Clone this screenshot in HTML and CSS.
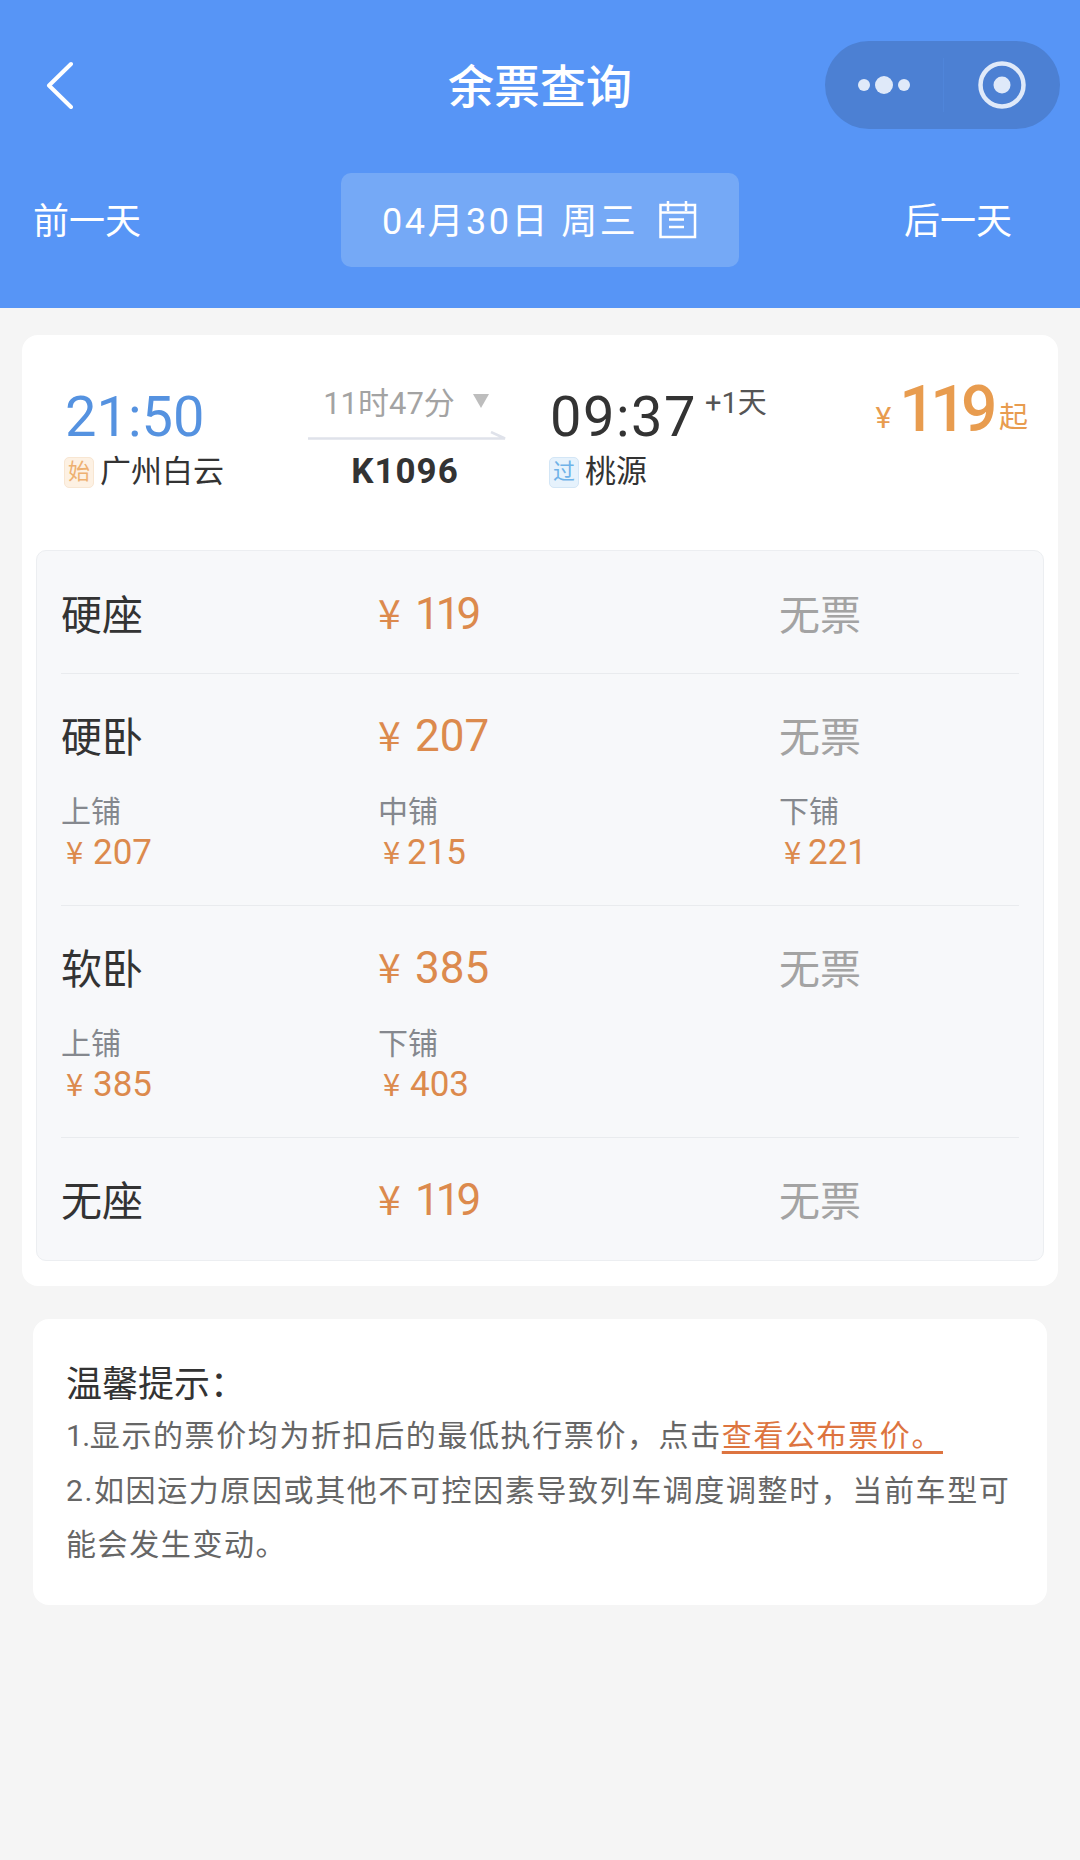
FILE: index.html
```html
<!DOCTYPE html>
<html>
<head>
  <title>余票查询</title>
  <link rel="stylesheet" href="styles.css">
</head>
<body>
  <header class="header">
    <div class="nav">
      <svg class="back" width="27" height="48" viewBox="0 0 27 48"><path d="M25 3 L3 24.500 L25 46" fill="none" stroke="#fff" stroke-width="4" stroke-linecap="round" stroke-linejoin="round"/></svg>
      <h1 class="nav-title">余票查询</h1>
      <div class="capsule">
        <div class="capsule-part">
          <svg width="52" height="20" viewBox="0 0 52 20"><circle cx="6" cy="10" r="6" fill="#dfe9f9"/><circle cx="26" cy="10" r="9" fill="#dfe9f9"/><circle cx="46" cy="10" r="6" fill="#dfe9f9"/></svg>
        </div>
        <div class="capsule-line"></div>
        <div class="capsule-part capsule-part-right">
          <svg width="48" height="48" viewBox="0 0 48 48"><circle cx="24" cy="24" r="21.500" fill="none" stroke="#dfe9f9" stroke-width="4.500"/><circle cx="24" cy="24" r="8.500" fill="#dfe9f9"/></svg>
        </div>
      </div>
    </div>
    <div class="date-row">
      <span class="day-link">前一天</span>
      <div class="date-box">
        <span class="date-text">04月30日 周三</span>
        <svg class="calendar" width="38" height="38" viewBox="0 0 38 38" fill="none" stroke="#fff" stroke-width="2.500"><path d="M1.500 4 H36 V36 H1.500 Z"/><path d="M1.500 11.500 H36"/><path d="M9 0 V10 M27 0 V10"/><path d="M10 18.500 H25 M10 26 H25"/></svg>
      </div>
      <span class="day-link day-link-right">后一天</span>
    </div>
  </header>

  <section class="card">
    <div class="train">
      <div class="depart">
        <div class="time time-blue">21:50</div>
        <div class="station"><span class="tag tag-orange">始</span>广州白云</div>
      </div>
      <div class="middle">
        <div class="duration">11时47分<span class="triangle"></span></div>
        <svg class="arrow" width="198" height="9" viewBox="0 0 198 9"><path d="M0 7.500 H197 L183 1" fill="none" stroke="#dfe2ea" stroke-width="2.500"/></svg>
        <div class="train-no">K1096</div>
      </div>
      <div class="arrive">
        <div class="time time-arrive">09:37<span class="next-day">+1天</span></div>
        <div class="station"><span class="tag tag-blue">过</span>桃源</div>
      </div>
      <div class="from-price"><span class="from-yen">¥</span><span class="from-num">119</span><span class="from-unit">起</span></div>
    </div>

    <div class="seats">
      <div class="seat">
        <div class="seat-main">
          <span class="seat-name">硬座</span>
          <span class="seat-price"><span class="yen">¥</span><span class="ones">119</span></span>
          <span class="seat-left">无票</span>
        </div>
      </div>
      <div class="seat">
        <div class="seat-main">
          <span class="seat-name">硬卧</span>
          <span class="seat-price"><span class="yen">¥</span>207</span>
          <span class="seat-left">无票</span>
        </div>
        <div class="berths">
          <div class="berth">上铺<div class="berth-price"><span class="berth-yen">¥</span>207</div></div>
          <div class="berth">中铺<div class="berth-price"><span class="berth-yen berth-yen-tight">¥</span>215</div></div>
          <div class="berth">下铺<div class="berth-price"><span class="berth-yen berth-yen-tight">¥</span>221</div></div>
        </div>
      </div>
      <div class="seat">
        <div class="seat-main">
          <span class="seat-name">软卧</span>
          <span class="seat-price"><span class="yen">¥</span>385</span>
          <span class="seat-left">无票</span>
        </div>
        <div class="berths">
          <div class="berth">上铺<div class="berth-price"><span class="berth-yen">¥</span>385</div></div>
          <div class="berth">下铺<div class="berth-price"><span class="berth-yen">¥</span>403</div></div>
        </div>
      </div>
      <div class="seat">
        <div class="seat-main">
          <span class="seat-name">无座</span>
          <span class="seat-price"><span class="yen">¥</span><span class="ones">119</span></span>
          <span class="seat-left">无票</span>
        </div>
      </div>
    </div>
  </section>

  <section class="notice">
    <div class="notice-title">温馨提示：</div>
    <p class="notice-line"><span class="notice-num">1.</span>显示的票价均为折扣后的最低执行票价，点击<span class="notice-link">查看公布票价。</span></p>
    <p class="notice-line">2.如因运力原因或其他不可控因素导致列车调度调整时，当前车型可能会发生变动。</p>
  </section>
</body>
</html>
```

FILE: styles.css
```css
* {
  box-sizing: border-box;
}

body {
  font-family: Roboto, "Noto Sans CJK SC", sans-serif;
  background-color: #f5f5f5;
  margin: 0;
  height: 1860px;
  overflow: hidden;
  color: #333;
}

/* header */
.header {
  background-color: #5795f6;
  height: 308px;
  padding-top: 41px;
  color: #fff;
}

.nav {
  display: grid;
  grid-template-columns: 1fr auto 1fr;
  align-items: center;
  height: 88px;
  padding: 0 20px;
}

.back {
  margin-left: 26px;
}

.nav-title {
  margin: 4px 0 0;
  font-size: 46px;
  line-height: 60px;
  font-weight: 500;
}

.capsule {
  justify-self: end;
  display: flex;
  align-items: center;
  width: 235px;
  height: 88px;
  border-radius: 44px;
  background-color: #4c80d3;
}

.capsule-part {
  display: flex;
  align-items: center;
  width: 118px;
  padding-left: 33px;
}

.capsule-line {
  width: 1px;
  height: 54px;
  background-color: #4f85da;
}

.capsule-part-right {
  width: 116px;
  padding-left: 34px;
}

.date-row {
  display: grid;
  grid-template-columns: 1fr 398px 1fr;
  align-items: center;
  margin-top: 44px;
  height: 94px;
}

.day-link {
  padding: 3px 0 0 33px;
  font-size: 36px;
  line-height: 50px;
}

.day-link-right {
  padding: 3px 68px 0 0;
  text-align: right;
}

.date-box {
  display: flex;
  align-items: center;
  height: 94px;
  padding-left: 41px;
  border-radius: 10px;
  background-color: #75a9f6;
}

.date-text {
  padding-top: 3px;
  font-size: 36px;
  line-height: 50px;
  letter-spacing: 2.500px;
  white-space: pre;
}

.calendar {
  margin-left: 21px;
}

/* train card */
.card {
  margin: 27px 22px 0;
  height: 951px;
  padding: 0 14px;
  border-radius: 16px;
  background-color: #fff;
}

.train {
  position: relative;
  display: flex;
  height: 215px;
  padding-top: 47px;
}

.depart {
  width: 272px;
  padding-left: 29px;
}

.time {
  font-size: 56px;
  line-height: 70px;
  color: #333;
  white-space: nowrap;
}

.time-blue {
  color: #5592e0;
}

.time-arrive {
  letter-spacing: 1.500px;
}

.station {
  display: flex;
  align-items: center;
  margin-top: -2px;
  font-size: 31px;
  line-height: 44px;
  color: #333;
  white-space: nowrap;
}

.tag {
  display: flex;
  align-items: center;
  justify-content: center;
  width: 30px;
  height: 31px;
  margin: 0 6px 0 -1px;
  border-radius: 5px;
  font-size: 22px;
}

.tag-orange {
  color: #eeb070;
  background-color: #fdf1e3;
  border: 1px solid #f8e6d2;
}

.tag-blue {
  color: #6fb2e8;
  background-color: #e6f2fc;
  border: 1px solid #d3e6f6;
}

.middle {
  width: 198px;
  margin-right: 44px;
  text-align: center;
}

.duration {
  padding: 4px 2px 0 0;
  font-size: 31px;
  line-height: 36px;
  color: #a3a3a3;
  white-space: nowrap;
}

.triangle {
  display: inline-block;
  margin-left: 18px;
  vertical-align: 6px;
  border-left: 8px solid transparent;
  border-right: 8px solid transparent;
  border-top: 14px solid #bdbdbd;
}

.arrow {
  display: block;
  margin-top: 9px;
}

.train-no {
  margin-top: 10px;
  padding-right: 4px;
  font-size: 35px;
  line-height: 44px;
  font-weight: 700;
  letter-spacing: 1px;
}

.arrive {
  width: 300px;
}

.next-day {
  margin-left: 8px;
  font-size: 29px;
  line-height: 30px;
  letter-spacing: 0;
  vertical-align: 23px;
  color: #555;
}

.from-price {
  position: absolute;
  top: 37px;
  right: 16px;
  color: #e89c4f;
  white-space: nowrap;
}

.from-yen {
  margin-right: 8px;
  font-size: 30px;
  vertical-align: 3px;
}

.from-num {
  font-size: 64px;
  line-height: 76px;
  font-weight: 500;
  letter-spacing: -5.500px;
}

.from-unit {
  margin-left: 7px;
  font-size: 29px;
  vertical-align: 3px;
}

/* seat table */
.seats {
  height: 711px;
  padding: 0 24px;
  border: 1px solid #eceef1;
  border-radius: 10px;
  background-color: #f7f8fa;
}

.seat {
  border-bottom: 1px solid #e9ebee;
  padding-top: 28px;
  height: 232px;
}

.seat:first-child {
  height: 123px;
  padding-top: 29px;
}

.seat:last-child {
  height: 123px;
  border-bottom: none;
}

.seat-main,
.berths {
  display: grid;
  grid-template-columns: 317px 401px 1fr;
}

.seat-main {
  align-items: center;
  height: 64px;
}

.seat-name {
  font-size: 41px;
  color: #333;
}

.seat-price {
  padding-top: 3px;
  font-size: 44px;
  color: #dc8a4d;
}

.yen {
  display: inline-block;
  width: 37px;
  font-size: 41px;
  font-family: "Noto Sans CJK SC", sans-serif;
  line-height: 44px;
}

.ones {
  letter-spacing: -4px;
}

.seat-left {
  font-size: 41px;
  color: #a3a3a3;
}

.berths {
  margin-top: 26px;
  font-size: 30px;
  line-height: 40px;
  color: #85888e;
}

.berth-price {
  padding-left: 5px;
  font-size: 35px;
  line-height: 42px;
  color: #dc8a4d;
}

.berth-yen {
  display: inline-block;
  width: 27px;
  font-size: 31px;
  font-family: "Noto Sans CJK SC", sans-serif;
  line-height: 36px;
}

.berth-yen-tight {
  width: 24px;
}

/* notice */
.notice {
  margin: 33px 33px 0;
  height: 286px;
  padding: 39px 34px 0 33px;
  border-radius: 16px;
  background-color: #fff;
}

.notice-title {
  font-size: 36px;
  line-height: 54px;
  margin-bottom: -3px;
  color: #333;
}

.notice-line {
  margin: 0;
  font-size: 30px;
  line-height: 54.500px;
  letter-spacing: 1.600px;
  color: #666;
}

.notice-num {
  letter-spacing: -0.500px;
}

.notice-link {
  color: #dd7440;
  text-decoration: underline;
  text-underline-offset: 5px;
  text-decoration-thickness: 3px;
}
```
